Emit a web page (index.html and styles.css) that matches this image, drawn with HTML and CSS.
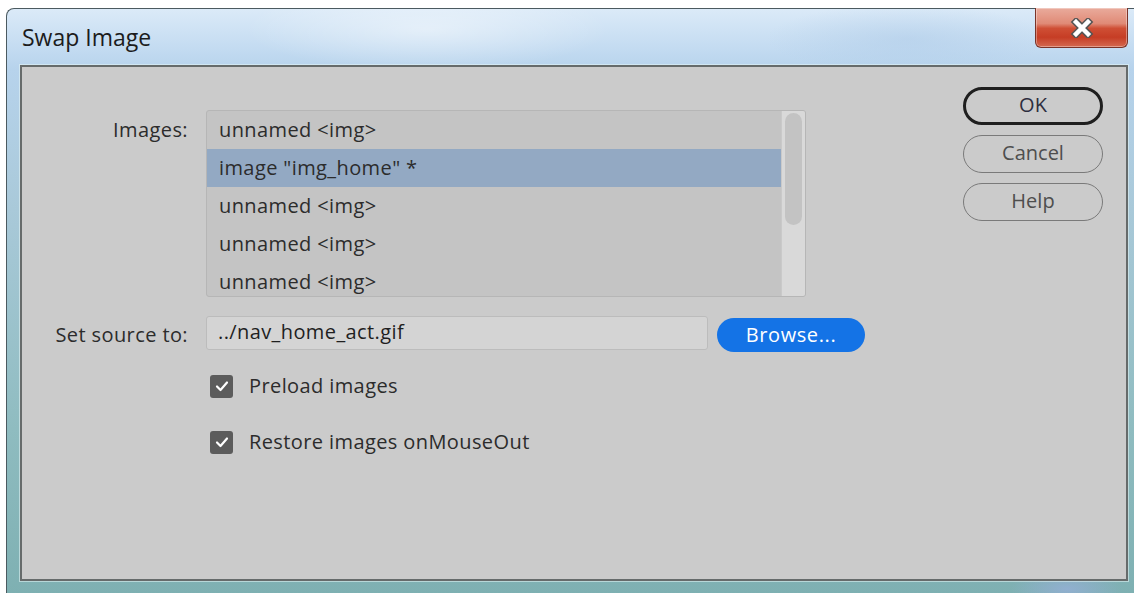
FILE: index.html
```html
<!DOCTYPE html>
<html lang="en">
<head>
<meta charset="utf-8">
<title>Swap Image</title>
<link rel="stylesheet" href="styles.css">
</head>
<body>
<div class="window">
  <div class="titlebar">
    <span class="title">Swap Image</span>
    <button class="close" type="button" aria-label="Close">
      <svg width="26" height="20" viewBox="0 0 26 20">
        <path d="M7 4 L19 16 M19 4 L7 16" stroke="#555555" stroke-width="7.5" stroke-linecap="square"/>
        <path d="M7 4 L19 16 M19 4 L7 16" stroke="#ffffff" stroke-width="4.5" stroke-linecap="square"/>
      </svg>
    </button>
  </div>
  <div class="panel">
    <div class="form">
      <div class="label label-images">Images:</div>
      <div class="listbox">
        <ul class="items">
          <li>unnamed &lt;img&gt;</li>
          <li class="selected">image "img_home" *</li>
          <li>unnamed &lt;img&gt;</li>
          <li>unnamed &lt;img&gt;</li>
          <li>unnamed &lt;img&gt;</li>
        </ul>
        <div class="scrollbar"><div class="thumb"></div></div>
      </div>

      <div class="label label-source">Set source to:</div>
      <div class="source-row">
        <div class="textfield">../nav_home_act.gif</div>
        <button class="browse" type="button">Browse...</button>
      </div>

      <label class="check check-first">
        <span class="box"><svg width="14" height="12" viewBox="0 0 14 12"><path d="M2 6.5 L5.5 10 L12 2.5" fill="none" stroke="#ffffff" stroke-width="2.2" stroke-linecap="round" stroke-linejoin="round"/></svg></span>
        <span>Preload images</span>
      </label>
      <label class="check check-second">
        <span class="box"><svg width="14" height="12" viewBox="0 0 14 12"><path d="M2 6.5 L5.5 10 L12 2.5" fill="none" stroke="#ffffff" stroke-width="2.2" stroke-linecap="round" stroke-linejoin="round"/></svg></span>
        <span>Restore images onMouseOut</span>
      </label>
    </div>

    <div class="actions">
      <button class="btn btn-default" type="button">OK</button>
      <button class="btn" type="button">Cancel</button>
      <button class="btn" type="button">Help</button>
    </div>
  </div>
</div>
</body>
</html>
```

FILE: styles.css
```css
html, body {
  margin: 0;
  padding: 0;
  background: #ffffff;
}

body {
  width: 1134px;
  height: 593px;
  overflow: hidden;
  font-family: "Open Sans", "Noto Sans", "DejaVu Sans", sans-serif;
}

/* Window chrome */
.window {
  box-sizing: border-box;
  margin: 8px 0 0 6px;
  width: 1128px;
  height: 585px;
  display: flex;
  flex-direction: column;
  border: 1px solid #4b5a60;
  border-right: none;
  border-bottom: none;
  border-radius: 8px 0 0 0;
  background:
    radial-gradient(ellipse 260px 60px at 420px 20px, rgba(255,255,255,0.45), rgba(255,255,255,0) 70%),
    radial-gradient(ellipse 200px 50px at 900px 30px, rgba(170,200,230,0.45), rgba(170,200,230,0) 70%),
    radial-gradient(ellipse 80px 30px at 1060px 580px, rgba(150,175,215,0.8), rgba(150,175,215,0) 70%),
    linear-gradient(180deg, #dbeaf8 0px, #c3dbf1 40px, #b7d3ec 60px, #a9c9d9 200px, #8fbcc0 420px, #7eb0b2 585px);
}

.titlebar {
  height: 56px;
  display: flex;
  align-items: flex-start;
  justify-content: space-between;
  flex: none;
}

.title {
  margin: 14px 0 0 15px;
  font-family: "Open Sans", "Noto Sans", sans-serif;
  font-size: 23px;
  line-height: 28px;
  color: #1c1c1c;
}

.close {
  margin: -1px 6px 0 0;
  width: 93px;
  height: 40px;
  padding: 0;
  border: 1px solid #7a3328;
  border-top: none;
  border-radius: 0 0 6px 6px;
  background: linear-gradient(180deg, #e9ab9c 0%, #e08a76 40%, #cf4f35 52%, #c63d25 75%, #d4694f 100%);
  box-shadow: inset 0 0 0 1px rgba(255,255,255,0.35);
  display: flex;
  align-items: center;
  justify-content: center;
}

/* Dialog body */
.panel {
  box-sizing: border-box;
  flex: 1;
  margin: 0 6px 12px 13px;
  border: 2px solid #666b6b;
  background: #cbcbcb;
  box-shadow: 0 0 0 1px rgba(230,245,245,0.55);
  display: flex;
  padding: 20px 23px 0 0;
}

.form {
  margin-top: 23px;
  display: grid;
  grid-template-columns: 166px auto;
  column-gap: 18px;
  align-content: start;
  font-size: 20px;
  letter-spacing: 0.4px;
  color: #2c2c2c;
}

.label {
  text-align: right;
  line-height: 38px;
}

.label-images {
  padding-top: 1px;
  align-self: start;
}

.label-source {
  margin-top: 19px;
  align-self: center;
}

/* Image list */
.listbox {
  box-sizing: border-box;
  width: 600px;
  height: 187px;
  display: flex;
  border: 1px solid #b6b6b6;
  border-radius: 3px;
  background: #c4c4c4;
  overflow: hidden;
}

.items {
  list-style: none;
  margin: 0;
  padding: 0;
  flex: 1;
}

.items li {
  height: 38px;
  line-height: 37px;
  padding-left: 12px;
  white-space: nowrap;
}

.items li.selected {
  background: #93a9c3;
}

.scrollbar {
  width: 24px;
  background: #d9d9d9;
  border-left: 1px solid #c9c9c9;
  padding: 2px 3px 0 3px;
  box-sizing: border-box;
}

.thumb {
  height: 112px;
  border-radius: 9px;
  background: #c3c3c3;
}

/* Source path */
.source-row {
  margin-top: 19px;
  display: flex;
  align-items: flex-start;
  gap: 9px;
}

.textfield {
  box-sizing: border-box;
  width: 502px;
  height: 34px;
  padding-left: 11px;
  line-height: 30px;
  border: 1px solid #bcbcbc;
  border-radius: 3px;
  background: #d4d4d4;
  color: #1f1f1f;
}

.browse {
  margin-top: 2px;
  width: 148px;
  height: 34px;
  border: none;
  border-radius: 17px;
  background: #1473e6;
  color: #ffffff;
  font-family: inherit;
  font-size: 20px;
  letter-spacing: 0.6px;
  padding: 0 0 2px 0;
}

/* Checkboxes */
.check {
  grid-column: 2;
  display: flex;
  align-items: center;
  gap: 16px;
  padding-left: 4px;
  height: 32px;
}

.check-first {
  margin-top: 16px;
}

.check-second {
  margin-top: 24px;
}

.check span:last-child {
  margin-top: -2px;
}

.box {
  box-sizing: border-box;
  width: 23px;
  height: 23px;
  border-radius: 3px;
  background: #5c5c5c;
  display: flex;
  align-items: center;
  justify-content: center;
}

/* Right-hand buttons */
.actions {
  margin-left: auto;
  display: flex;
  flex-direction: column;
  gap: 10px;
}

.btn {
  box-sizing: border-box;
  width: 140px;
  height: 38px;
  border: 1.5px solid #7a7a7a;
  border-radius: 19px;
  background: transparent;
  color: #4e4e4e;
  font-family: inherit;
  font-size: 20px;
  padding: 0 0 3px 0;
}

.btn-default {
  border: 3px solid #1f1f1f;
  color: #2e2e3e;
}
```
